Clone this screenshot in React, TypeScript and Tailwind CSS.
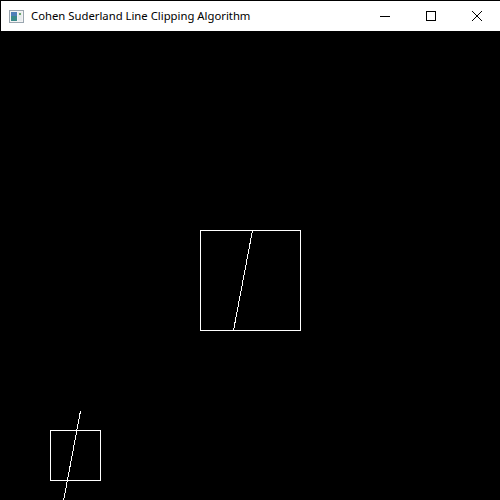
import React from "react";

const AppIcon = () => (
  <svg width="16" height="14" viewBox="0 0 16 14" className="block">
    <rect x="0.5" y="0.5" width="14" height="12" fill="#f4f4f4" stroke="#9aa6b0" />
    <rect x="2" y="2" width="6" height="9" fill="#3a8a8a" />
    <rect x="2" y="2" width="6" height="4" fill="#4f7fb8" />
    <rect x="9" y="2" width="4" height="9" fill="#e8ecef" />
    <rect x="10" y="3" width="2" height="2" fill="#6da86d" />
  </svg>
);

const App = () => {
  return (
    <div className="w-[500px] h-[500px] bg-black pt-px pl-px overflow-hidden">
      {/* title bar */}
      <div className="h-[30px] bg-white flex items-center">
        <div className="ml-2 mr-[6px] mt-px">
          <AppIcon />
        </div>
        <span
          className="text-[11.3px] text-black leading-none"
          style={{ fontFamily: '"Noto Sans", "Open Sans", sans-serif' }}
        >
          Cohen Suderland Line Clipping Algorithm
        </span>
        <div className="ml-auto flex h-full">
          <div className="w-[46px] h-full flex items-center justify-center">
            <svg width="10" height="10" viewBox="0 0 10 10">
              <line x1="0" y1="5.5" x2="10" y2="5.5" stroke="#000" strokeWidth="1" />
            </svg>
          </div>
          <div className="w-[46px] h-full flex items-center justify-center">
            <svg width="10" height="10" viewBox="0 0 10 10">
              <rect x="0.5" y="0.5" width="9" height="9" fill="none" stroke="#000" strokeWidth="1" />
            </svg>
          </div>
          <div className="w-[46px] h-full flex items-center justify-center">
            <svg width="10" height="10" viewBox="0 0 10 10">
              <line x1="0" y1="0" x2="10" y2="10" stroke="#000" strokeWidth="1" />
              <line x1="10" y1="0" x2="0" y2="10" stroke="#000" strokeWidth="1" />
            </svg>
          </div>
        </div>
      </div>

      {/* canvas */}
      <svg width="500" height="470" viewBox="0 31 500 470" className="block -ml-px" shapeRendering="crispEdges">
        <rect x="200.5" y="230.5" width="100" height="100" fill="none" stroke="#fff" strokeWidth="1" />
        <line x1="252.5" y1="230.5" x2="233.5" y2="330.5" stroke="#fff" strokeWidth="1" />
        <rect x="50.5" y="430.5" width="50" height="50" fill="none" stroke="#fff" strokeWidth="1" />
        <line x1="80.5" y1="411" x2="63.5" y2="501" stroke="#fff" strokeWidth="1" />
      </svg>
    </div>
  );
};

export default App;
